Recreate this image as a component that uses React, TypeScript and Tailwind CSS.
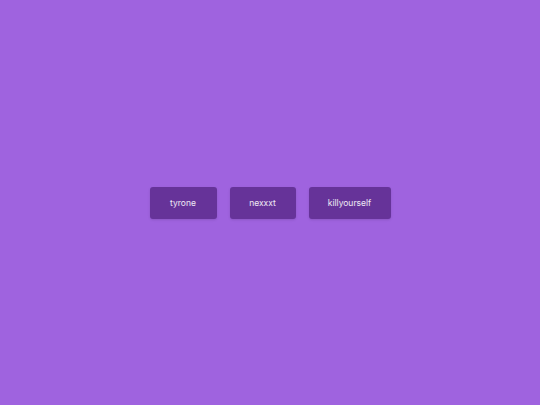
const buttons = [
  { label: 'tyrone', width: 'w-[67px]' },
  { label: 'nexxxt', width: 'w-[66px]' },
  { label: 'killyourself', width: 'w-[82px]' },
]

export default function App() {
  return (
    <div className="flex h-[405px] w-[540px] items-center justify-center gap-[13px] bg-[#9f63df] pt-px font-['Inter',sans-serif]">
      {buttons.map((b) => (
        <button
          key={b.label}
          className={`${b.width} h-[32px] rounded-[3px] bg-[#663399] text-[8.5px] text-white/90 shadow-sm`}
        >
          {b.label}
        </button>
      ))}
    </div>
  )
}
